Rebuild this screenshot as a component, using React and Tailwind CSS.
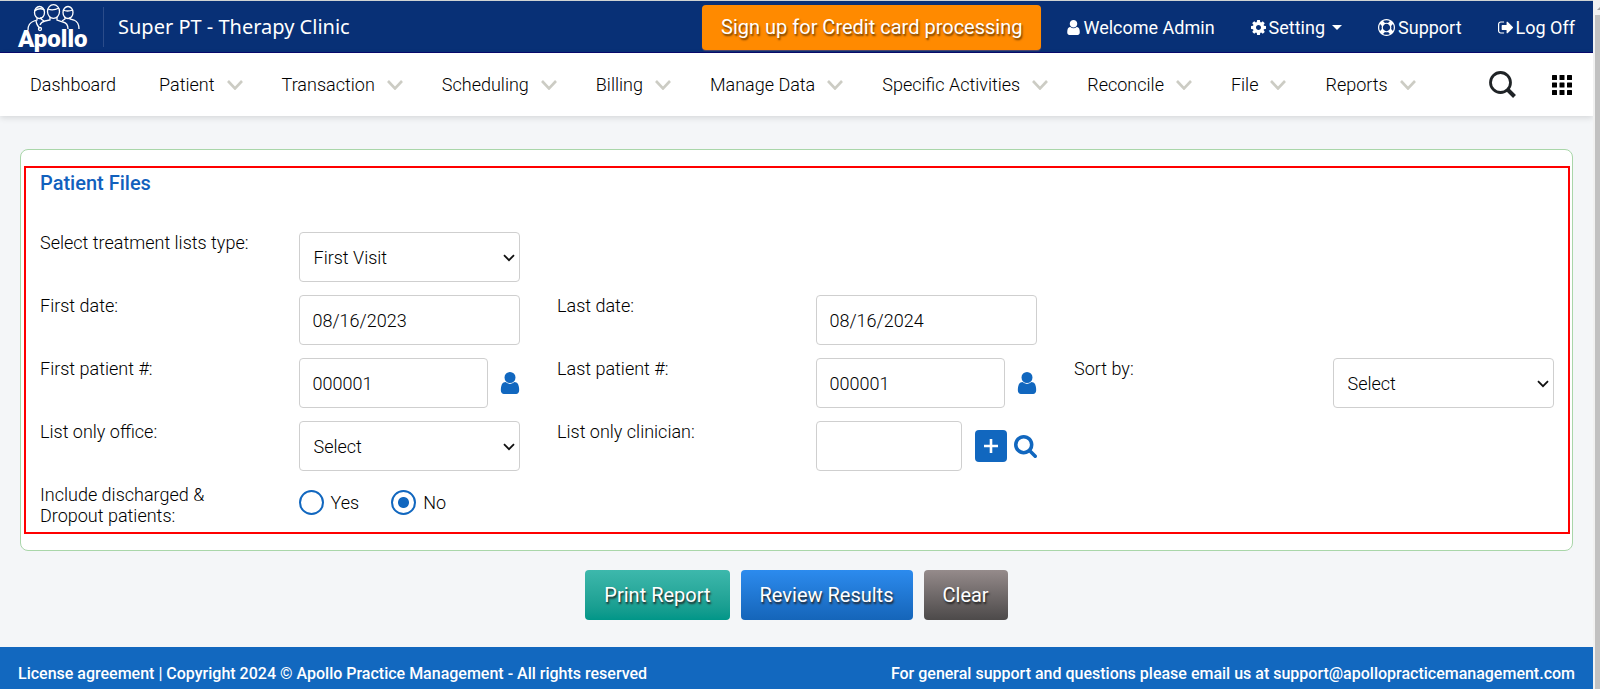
const icons = {
  user: 'M1536 1399q0 109-62.5 187t-150.5 78h-854q-88 0-150.5-78t-62.5-187q0-85 8.5-160.5t31.5-152 58.5-131 94-89 134.5-34.5q131 128 313 128t313-128q76 0 134.5 34.5t94 89 58.5 131 31.5 152 8.5 160.5zm-256-887q0 159-112.5 271.5t-271.5 112.5-271.5-112.5-112.5-271.5 112.5-271.5 271.5-112.5 271.5 112.5 112.5 271.5z',
  search: 'M1216 832q0-185-131.5-316.5t-316.5-131.5-316.5 131.5-131.5 316.5 131.5 316.5 316.5 131.5 316.5-131.5 131.5-316.5zm512 832q0 52-38 90t-90 38q-54 0-90-38l-343-342q-179 124-399 124-143 0-273.5-55.5t-225-150-150-225-55.5-273.5 55.5-273.5 150-225 225-150 273.5-55.5 273.5 55.5 225 150 150 225 55.5 273.5q0 220-124 399l343 343q37 37 37 90z',
  cog: 'M1152 896q0-106-75-181t-181-75-181 75-75 181 75 181 181 75 181-75 75-181zm512-109v222q0 12-8 23t-20 13l-185 28q-19 54-39 91 35 50 107 138 10 12 10 25t-9 23q-27 37-99 108t-94 71q-12 0-26-9l-138-108q-44 23-91 38-16 136-29 186-7 28-36 28h-222q-14 0-24.5-8.5t-11.5-21.5l-28-184q-49-16-90-37l-141 107q-10 9-25 9-14 0-25-11-126-114-165-168-7-10-7-23 0-12 8-23 15-21 51-66.5t54-70.5q-27-50-41-99l-183-27q-13-2-21-12.5t-8-23.5v-222q0-12 8-23t19-13l186-28q14-46 39-92-40-57-107-138-10-12-10-24 0-10 9-23 26-36 98.5-107.5t94.5-71.5q13 0 26 10l138 107q44-23 91-38 16-136 29-186 7-28 36-28h222q14 0 24.5 8.5t11.5 21.5l28 184q49 16 90 37l142-107q9-9 24-9 13 0 25 10 129 119 165 170 7 8 7 22 0 12-8 23-15 21-51 66.5t-54 70.5q26 50 41 98l183 28q13 2 21 12.5t8 23.5z',
  lifeRing: 'M896 0q182 0 348 71t286 191 191 286 71 348-71 348-191 286-286 191-348 71-348-71-286-191-191-286-71-348 71-348 191-286 286-191 348-71zm0 128q-190 0-361 90l194 194q82-28 167-28t167 28l194-194q-171-90-361-90zm-678 1129l194-194q-28-82-28-167t28-167l-194-194q-90 171-90 361t90 361zm678 407q190 0 361-90l-194-194q-82 28-167 28t-167-28l-194 194q171 90 361 90zm0-384q159 0 271.5-112.5t112.5-271.5-112.5-271.5-271.5-112.5-271.5 112.5-112.5 271.5 112.5 271.5 271.5 112.5zm484-217l194 194q90-171 90-361t-90-361l-194 194q28 82 28 167t-28 167z',
  signOut: 'M704 1440q0 4 1 20t.5 26.5-3 23.5-10 19.5-20.5 6.5h-320q-119 0-203.5-84.5t-84.5-203.5v-704q0-119 84.5-203.5t203.5-84.5h320q13 0 22.5 9.5t9.5 22.5q0 4 1 20t.5 26.5-3 23.5-10 19.5-20.5 6.5h-320q-66 0-113 47t-47 113v704q0 66 47 113t113 47h312l11.5 1 11.5 3 8 5.5 7 9 2 13.5zm928-544q0 26-19 45l-544 544q-19 19-45 19t-45-19-19-45v-288h-448q-26 0-45-19t-19-45v-384q0-26 19-45t45-19h448v-288q0-26 19-45t45-19 45 19l544 544q19 19 19 45z',
};

const Icon = ({ name, viewBox = '0 0 1792 1792', className }) => (
  <svg viewBox={viewBox} className={className} fill="currentColor" aria-hidden="true">
    <path d={icons[name]} />
  </svg>
);

const menuItems = [
  'Patient',
  'Transaction',
  'Scheduling',
  'Billing',
  'Manage Data',
  'Specific Activities',
  'Reconcile',
  'File',
  'Reports',
];

const inputClass =
  'h-[50px] w-full min-w-0 rounded border border-[#cfcfcf] bg-white px-[13px] text-[18px] font-light text-black';

function Select({ id, options }) {
  return (
    <div className="relative h-[50px]">
      <select
        id={id}
        className="h-[50px] w-full appearance-none rounded border border-[#cfcfcf] bg-white pr-8 pl-[14px] text-[18px] font-light text-black"
      >
        {options.map((option) => (
          <option key={option}>{option}</option>
        ))}
      </select>
      <svg
        viewBox="0 0 12 8"
        className="pointer-events-none absolute top-[22px] right-[5px] h-2 w-3"
        fill="none"
        stroke="#111"
        strokeWidth="1.800"
        aria-hidden="true"
      >
        <path d="M1 1.200l5 5 5-5" />
      </svg>
    </div>
  );
}

function Logo() {
  return (
    <svg
      viewBox="0 0 72 50"
      className="h-[50px] w-[72px] overflow-visible"
      fill="none"
      stroke="#fff"
      aria-label="Apollo"
    >
      <g strokeWidth="1.300" transform="translate(0 1)">
        <ellipse cx="21.500" cy="9.500" rx="5" ry="6" />
        <ellipse cx="50" cy="9.500" rx="5" ry="6" />
        <ellipse cx="35.500" cy="8.500" rx="6" ry="6.800" />
        <path d="M16.500 8q5-4 10-1M45 7q4 2 10 0M30 6q5 2 11-1" />
        <path d="M10 27q0-7 6-9l3-1v-2M23 14v2l3 2M47 14v2l-3 2M52 14v2l4 1q5 2 5 9" />
        <path d="M22 22q1-3 5-4l5-1v-3M39 14v3l6 2q5 1 5 7" />
        <path d="M18 18q1 5 4 7" />
        <circle cx="22" cy="26" r="1.500" />
      </g>
      <text
        x="0"
        y="45"
        fill="#fff"
        stroke="none"
        className="font-['Roboto',sans-serif] text-[24px] font-black"
      >
        Apollo
      </text>
    </svg>
  );
}

function TopBar() {
  return (
    <header className="flex h-[53px] items-center border-t border-b border-t-[#cfd3d3] border-b-[#0a0a6e] bg-[#083076] px-[18px] text-white">
      <Logo />
      <div className="ml-[13px] h-10 w-px bg-[#2b4c8a]" />
      <div className="ml-[14px] font-['Noto_Sans',sans-serif] text-[20px]">Super PT - Therapy Clinic</div>
      <div className="ml-auto flex items-center gap-9 pt-px text-[18px]">
        <div className="flex items-center gap-[26px]">
          <button className="h-[45px] rounded-[4px] bg-[#ff8a00] px-[19px] text-[20px] shadow-[0_1px_1px_#5a4a6a] [text-shadow:1px_2px_2px_#6b3a00]">
            Sign up for Credit card processing
          </button>
          <a href="#profile" className="flex items-center gap-[3px]">
            <Icon name="user" viewBox="256 128 1280 1536" className="h-[15px] w-[13px]" />
            Welcome Admin
          </a>
        </div>
        <a href="#setting" className="flex items-center gap-[3px]">
          <Icon name="cog" viewBox="128 128 1536 1536" className="size-[15px]" />
          Setting
          <svg viewBox="0 0 10 5" className="ml-1 h-[5px] w-[10px]" fill="currentColor">
            <path d="M0 0h10L5 5z" />
          </svg>
        </a>
        <a href="#support" className="flex items-center gap-[3px]">
          <Icon name="lifeRing" className="size-[17px]" />
          Support
        </a>
        <a href="#logoff" className="flex items-center gap-[3px]">
          <Icon name="signOut" viewBox="64 256 1568 1280" className="h-[13px] w-[15px]" />
          Log Off
        </a>
      </div>
    </header>
  );
}

function NavBar() {
  return (
    <nav className="flex h-[63px] items-center bg-white pr-[21px] pl-[30px] text-[18px] font-light text-black shadow-[0_2px_6px_rgba(0,0,0,0.12)]">
      <a href="#dashboard" className="mr-[43px]">
        Dashboard
      </a>
      <div className="flex items-center gap-[39px]">
        {menuItems.map((item) => (
          <a key={item} href="#menu" className="flex items-center gap-3 whitespace-nowrap">
            {item}
            <svg viewBox="0 0 16 10" className="h-[10px] w-4" fill="none" stroke="#ccccc4" strokeWidth="2.600">
              <path d="M1 1l7 7.500L15 1" />
            </svg>
          </a>
        ))}
      </div>
      <button className="ml-auto" aria-label="Search">
        <svg viewBox="0 0 27 27" className="size-[27px]" fill="none" stroke="#1f2326">
          <circle cx="11.500" cy="11.500" r="10" strokeWidth="2.800" />
          <path d="M18.500 18.500l7 7" strokeWidth="4" />
        </svg>
      </button>
      <button className="ml-9" aria-label="Apps">
        <svg viewBox="0 0 20 20" className="size-5" fill="#000">
          {[0, 7.5, 15].map((y) => [0, 7.5, 15].map((x) => (
            <rect key={`${x}-${y}`} x={x} y={y} width="5" height="5" rx="0.500" />
          )))}
        </svg>
      </button>
    </nav>
  );
}

function RadioOption({ label, value, defaultChecked }) {
  return (
    <label className="flex items-center gap-[7px]">
      <input
        type="radio"
        name="discharged"
        value={value}
        defaultChecked={defaultChecked}
        className="size-[25px] appearance-none rounded-full border-2 border-[#1167bf] bg-white checked:bg-[radial-gradient(circle,#1167bf_5px,#fff_6px)]"
      />
      {label}
    </label>
  );
}

function PatientFilesForm() {
  return (
    <section className="mx-5 mt-[33px] rounded-lg border border-[#a9d6a9] bg-white py-4 pr-[2px] pl-[3px]">
      <div className="border-2 border-[#ff0000] px-[14px] pb-[6px]">
        <h1 className="mb-[34px] text-[20px] leading-[30px] font-medium text-[#1160bd]">Patient Files</h1>
        <div className="grid grid-cols-6 gap-x-[37px] gap-y-[13px] text-[18px] leading-[21px] font-light text-black">
          <label htmlFor="listType">Select treatment lists type:</label>
          <Select id="listType" options={['First Visit']} />

          <label htmlFor="firstDate" className="col-start-1">First date:</label>
          <input id="firstDate" type="text" defaultValue="08/16/2023" className={inputClass} />
          <label htmlFor="lastDate">Last date:</label>
          <input id="lastDate" type="text" defaultValue="08/16/2024" className={inputClass} />

          <label htmlFor="firstPatient" className="col-start-1">First patient #:</label>
          <div className="flex items-center gap-3">
            <input id="firstPatient" type="text" defaultValue="000001" className={inputClass} />
            <button className="shrink-0 text-[#1167bf]" aria-label="Pick first patient">
              <Icon name="user" viewBox="256 128 1280 1536" className="h-[22px] w-5" />
            </button>
          </div>
          <label htmlFor="lastPatient">Last patient #:</label>
          <div className="flex items-center gap-3">
            <input id="lastPatient" type="text" defaultValue="000001" className={inputClass} />
            <button className="shrink-0 text-[#1167bf]" aria-label="Pick last patient">
              <Icon name="user" viewBox="256 128 1280 1536" className="h-[22px] w-5" />
            </button>
          </div>
          <label htmlFor="sortBy">Sort by:</label>
          <Select id="sortBy" options={['Select']} />

          <label htmlFor="office" className="col-start-1">List only office:</label>
          <Select id="office" options={['Select']} />
          <label htmlFor="clinician">List only clinician:</label>
          <div className="flex items-center">
            <input id="clinician" type="text" className={inputClass} />
            <button
              className="ml-[13px] flex size-8 shrink-0 items-center justify-center rounded bg-[#1167bf] text-white"
              aria-label="Add clinician"
            >
              <svg viewBox="0 0 14 14" className="size-[14px]" fill="none" stroke="currentColor" strokeWidth="2.600">
                <path d="M7 0v14M0 7h14" />
              </svg>
            </button>
            <button className="ml-[7px] shrink-0 text-[#1167bf]" aria-label="Find clinician">
              <Icon name="search" viewBox="64 128 1664 1664" className="size-[23px]" />
            </button>
          </div>

          <div className="col-start-1">
            Include discharged &<br />
            Dropout patients:
          </div>
          <div className="col-span-2 flex items-start gap-8 pt-[6px]">
            <RadioOption label="Yes" value="yes" />
            <RadioOption label="No" value="no" defaultChecked />
          </div>
        </div>
      </div>
    </section>
  );
}

function Actions() {
  const base = 'h-[50px] rounded-[4px] px-[19px] text-[20px] text-white [text-shadow:1px_2px_2px_#222]';
  return (
    <div className="mt-[19px] flex justify-center gap-[11px]">
      <button className={`${base} bg-linear-to-b from-[#3db8ac] to-[#009688]`}>Print Report</button>
      <button className={`${base} bg-linear-to-b from-[#2c8bee] to-[#1565b9]`}>Review Results</button>
      <button className={`${base} bg-linear-to-b from-[#958b8b] to-[#4d4a4a]`}>Clear</button>
    </div>
  );
}

// Always-visible scroll track on the right edge
function ScrollTrack() {
  return (
    <div className="flex w-[7px] flex-col bg-[#f1f1f1] pl-[2px]">
      <div className="h-[15px]">
        <svg viewBox="0 0 5 15" className="h-[15px] w-[5px]" fill="#a3a3a3">
          <path d="M2 10l3-3v3z" />
        </svg>
      </div>
      <div className="flex-1 bg-[#c1c1c1]" />
    </div>
  );
}

export default function App() {
  return (
    <div className="flex min-h-screen bg-[#f4f6f8] font-['Roboto',sans-serif]">
      <div className="flex min-w-0 flex-1 flex-col">
        <TopBar />
        <NavBar />
        <main className="pb-[27px]">
          <PatientFilesForm />
          <Actions />
        </main>
        <footer className="mt-auto flex justify-between bg-[#1268bf] px-[18px] pt-[17px] pb-[5px] text-[16px] leading-5 font-medium text-white">
          <div>License agreement | Copyright 2024 © Apollo Practice Management - All rights reserved</div>
          <div>For general support and questions please email us at support@apollopracticemanagement.com</div>
        </footer>
      </div>
      <ScrollTrack />
    </div>
  );
}
